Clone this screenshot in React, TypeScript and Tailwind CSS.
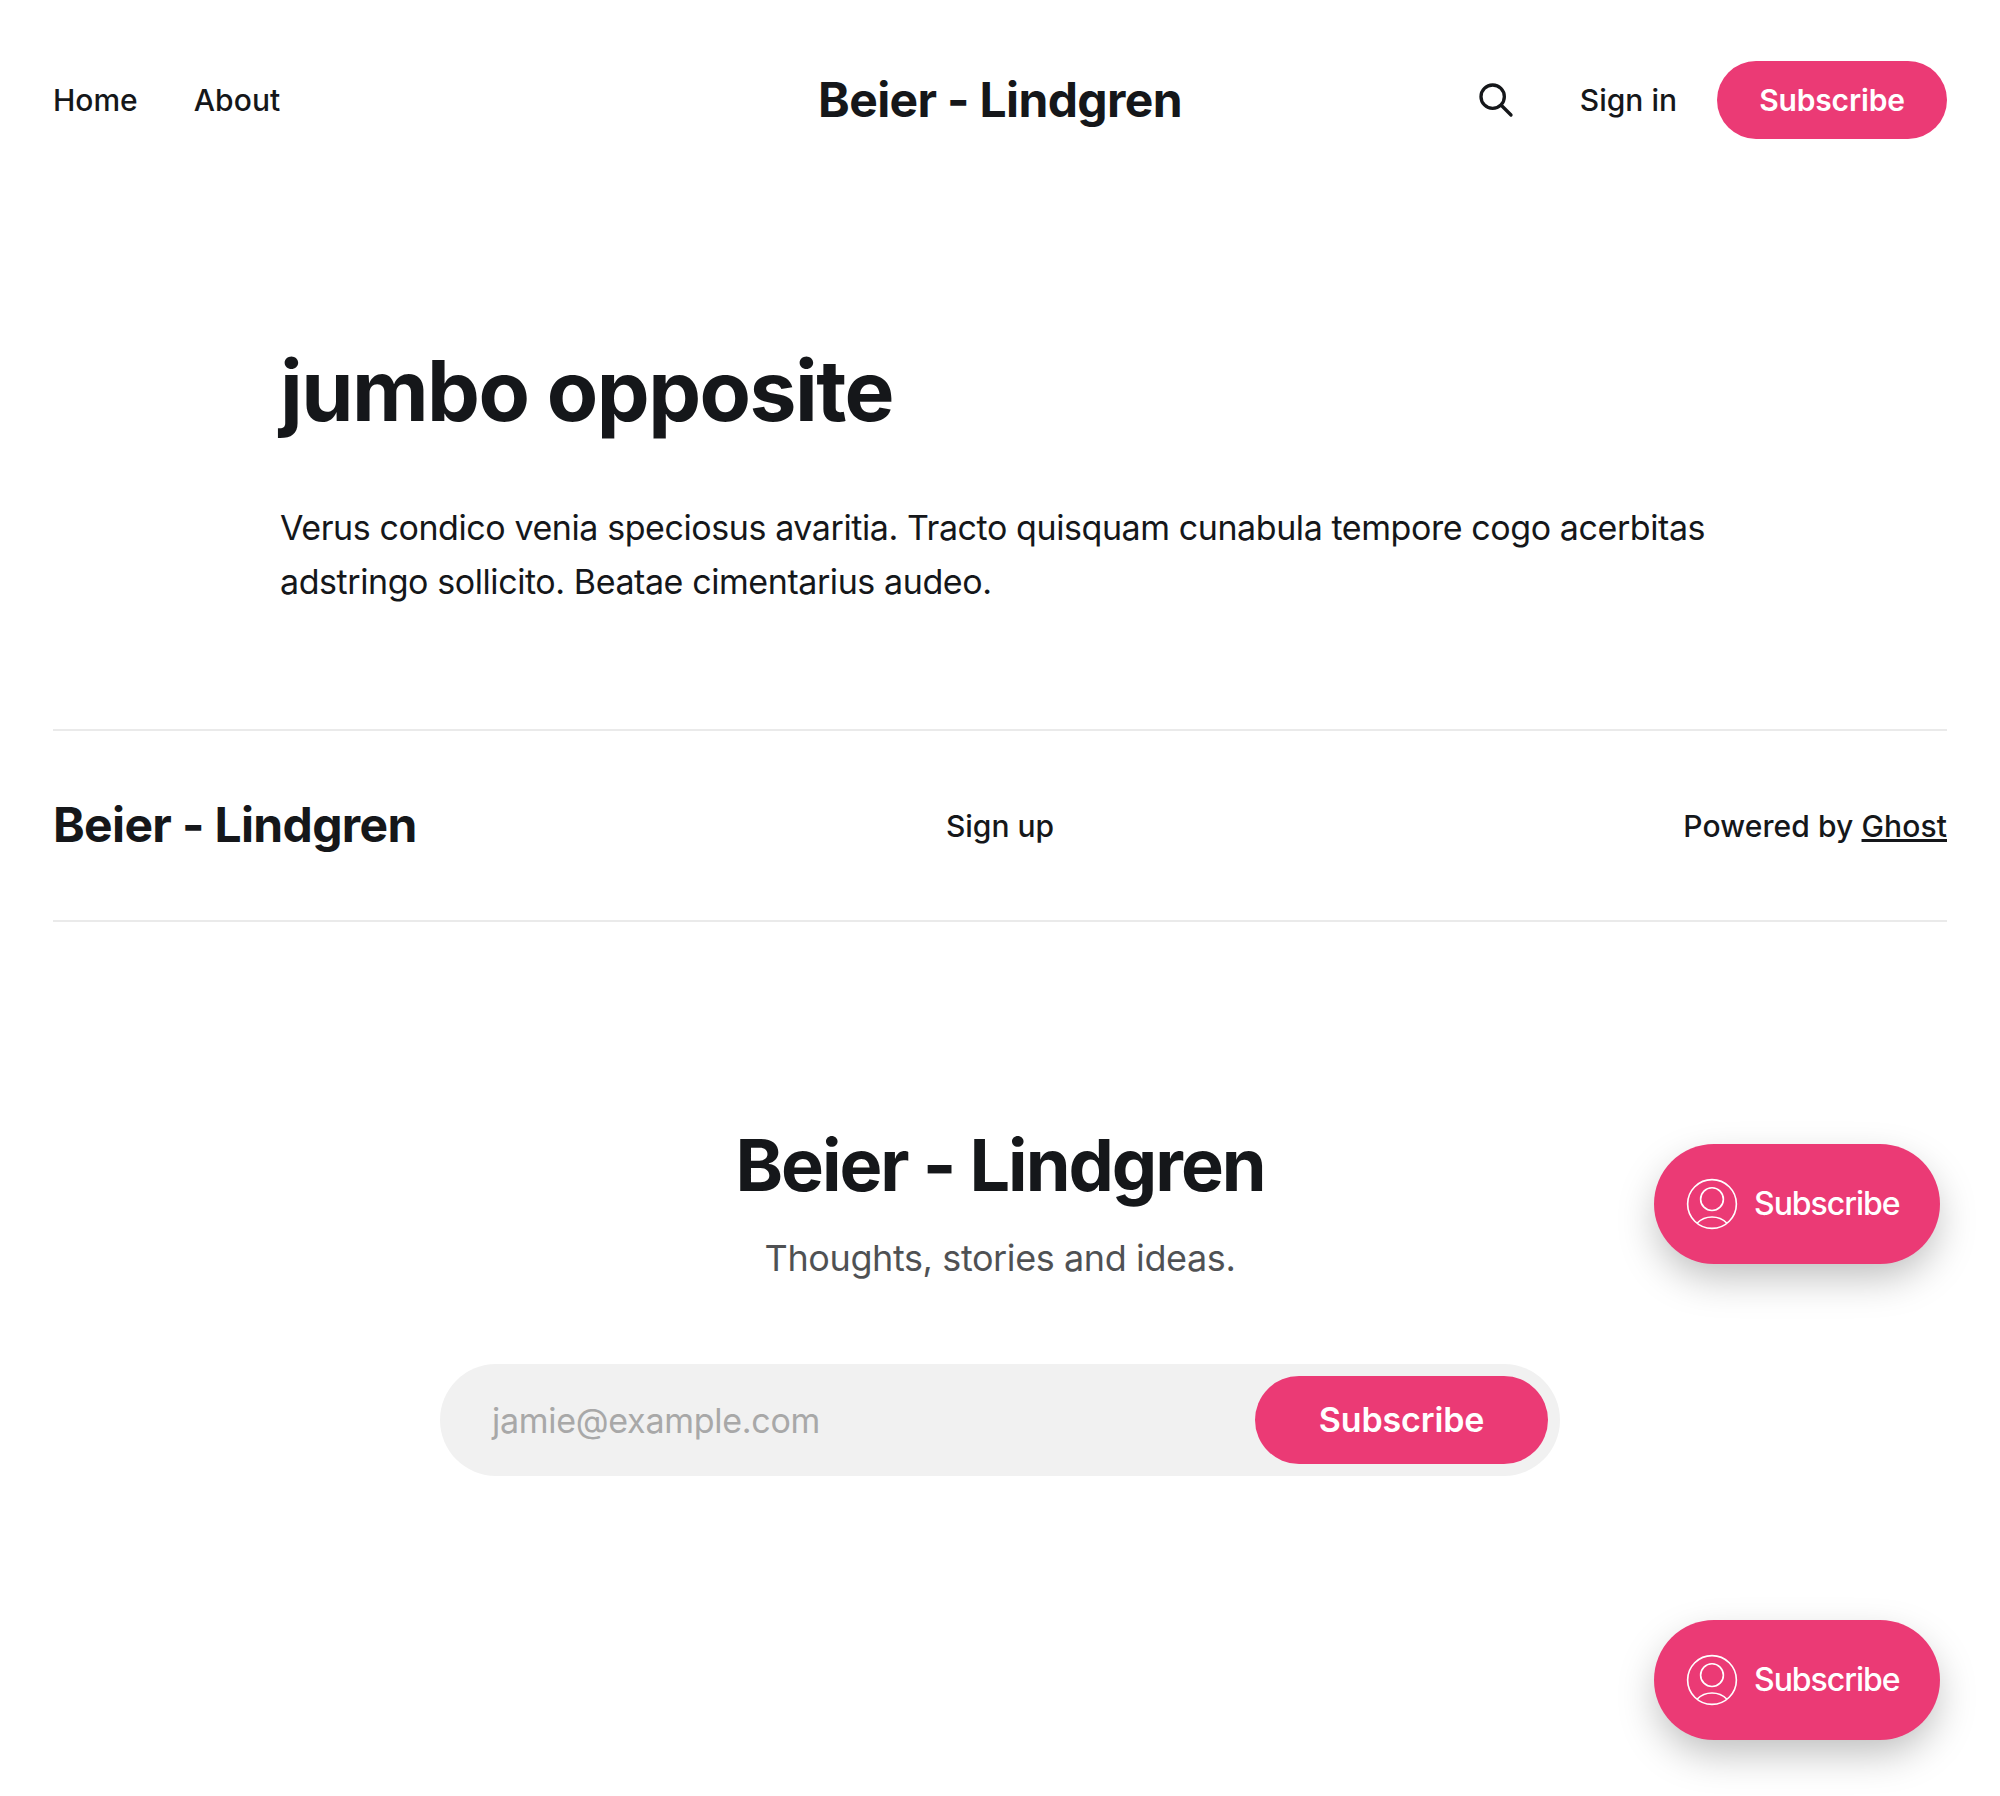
function Portal({ cls }: { cls: string }) {
  return (
    <div className={`absolute left-[1654px] flex h-[120px] w-[286px] items-center rounded-full bg-[#eb3a75] pl-8 text-white shadow-[0_16px_40px_-4px_rgba(0,0,0,0.27)] ${cls}`}>
      <svg width="52" height="52" viewBox="0 0 24 24" fill="none" stroke="currentColor" strokeWidth="0.75" className="shrink-0">
        <circle cx="12" cy="12" r="11.25" />
        <circle cx="12" cy="9.75" r="5.25" />
        <path d="M18.913 20.876a9.746 9.746 0 0 0-13.826 0" />
      </svg>
      <span className="ml-4 text-[32px] font-medium leading-none tracking-[-1.04px]">Subscribe</span>
    </div>
  );
}

export default function App() {
  return (
    <div className="relative h-[1796px] w-[2000px] overflow-hidden bg-white font-['Inter',sans-serif] text-[#15171a]">
      <header className="grid h-[200px] grid-cols-[1fr_auto_1fr] items-center px-[53px] text-[30px] font-medium">
        <nav className="flex gap-14">
          <a>Home</a>
          <a className="tracking-[0.1px]">About</a>
        </nav>
        <div className="text-[48px] font-bold tracking-[-0.65px]">Beier - Lindgren</div>
        <div className="flex items-center justify-end">
          <svg width="40" height="40" viewBox="0 0 24 24" fill="none" stroke="currentColor" strokeWidth="2" strokeLinecap="round" strokeLinejoin="round" className="mr-16">
            <path d="M21 21l-6-6m2-5a7 7 0 11-14 0 7 7 0 0114 0z" />
          </svg>
          <a className="mr-10">Sign in</a>
          <a className="flex h-[78px] w-[230px] items-center justify-center rounded-full bg-[#eb3a75] font-semibold tracking-[-0.15px] text-white">Subscribe</a>
        </div>
      </header>
      <main className="h-[529px] px-[280px] pt-[139px]">
        <h1 className="text-[84px] font-bold leading-[104px] tracking-[-1.55px]">jumbo opposite</h1>
        <p className="mt-[58px] w-[1440px] text-[34px] leading-[54px] tracking-[-0.42px]">Verus condico venia speciosus avaritia. Tracto quisquam cunabula tempore cogo acerbitas adstringo sollicito. Beatae cimentarius audeo.</p>
      </main>
      <footer className="mx-[53px]">
        <div className="grid h-[193px] grid-cols-[1fr_auto_1fr] items-center border-y-2 border-[#eaeaea] text-[30px] font-medium">
          <div className="pb-px text-[48px] font-bold tracking-[-0.65px]">Beier - Lindgren</div>
          <a className="pt-0.5">Sign up</a>
          <div className="pt-0.5 text-right tracking-[0.1px]">Powered by <a className="underline decoration-[3px]">Ghost</a></div>
        </div>
        <section className="flex flex-col items-center pt-[198px]">
          <h2 className="text-[72px] font-bold leading-[90px] tracking-[-2px]">Beier - Lindgren</h2>
          <p className="mt-[21px] text-[36px] leading-[54px] tracking-[-0.4px] opacity-75">Thoughts, stories and ideas.</p>
          <div className="mt-[79px] flex h-[112px] w-[1120px] items-center justify-between rounded-full bg-[#f1f1f1] pl-[52px] pr-3">
            <span className="text-[34px] tracking-[-0.28px] text-[#a8a8a8]">jamie@example.com</span>
            <a className="flex h-[88px] w-[293px] items-center justify-center rounded-full bg-[#eb3a75] pb-0.5 text-[34px] font-semibold tracking-[-0.15px] text-white">Subscribe</a>
          </div>
        </section>
      </footer>
      <Portal cls="top-[1144px]" />
      <Portal cls="top-[1620px]" />
    </div>
  );
}
